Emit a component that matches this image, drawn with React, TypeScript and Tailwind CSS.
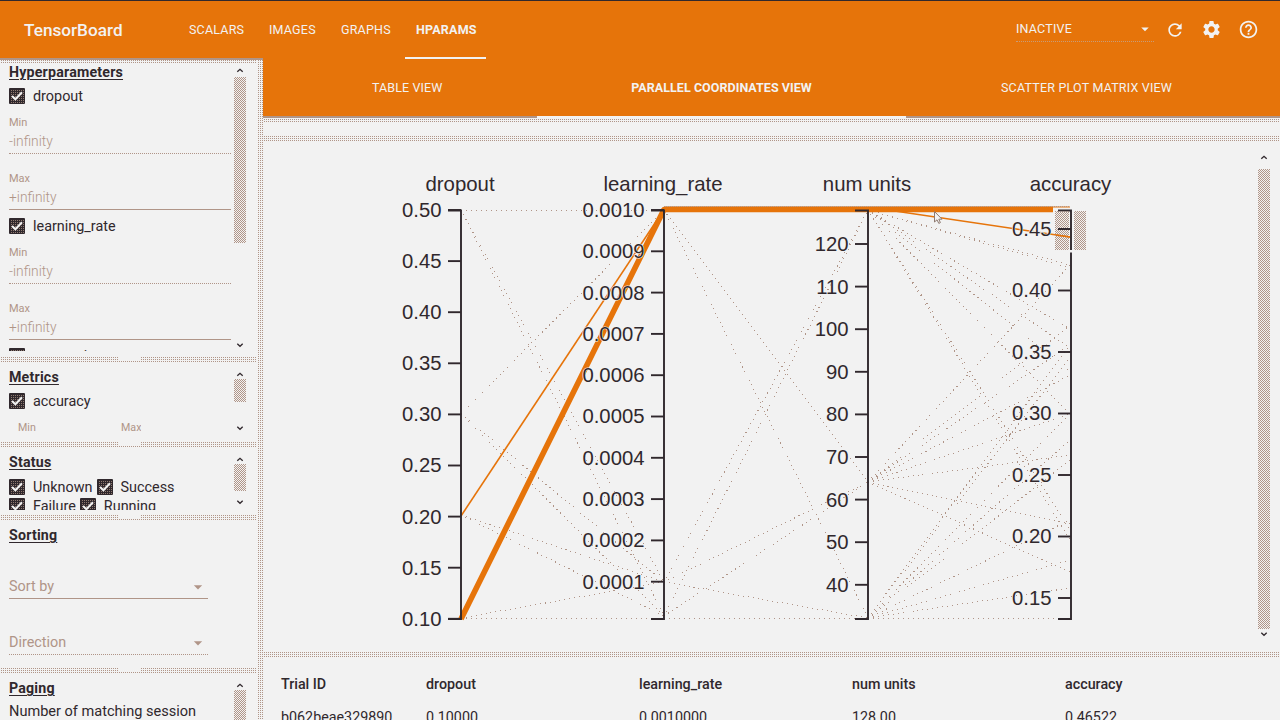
import React from "react";
import { MdRefresh, MdSettings, MdHelpOutline, MdArrowDropDown } from "react-icons/md";

const INK = "#30282d";
const TAN = "#b09588";
const ORANGE = "#e6740a";

function Check() {
  return (
    <svg width="16" height="16" viewBox="0 0 16 16" className="shrink-0">
      <defs>
        <pattern id="weave" width="2" height="2" patternUnits="userSpaceOnUse">
          <rect width="2" height="2" fill={INK} />
          <rect width="1" height="1" fill="#8f7a70" />
        </pattern>
      </defs>
      <rect width="16" height="16" rx="1" fill={INK} />
      <rect x="1" y="1" width="14" height="14" fill="url(#weave)" />
      <path d="M3 8L6.4 11.3L13 4.2" fill="none" stroke="#f2f2f2" strokeWidth="2" />
    </svg>
  );
}

function Chevron({ down = false }: { down?: boolean }) {
  return (
    <svg width="12" height="8" viewBox="0 0 12 8" className="shrink-0">
      <path d={down ? "M3.3 1.8L6 4.3L8.7 1.8" : "M3.3 4.8L6 2.3L8.7 4.8"} fill="none" stroke={INK} strokeWidth="1.3" />
    </svg>
  );
}

function Bar({ thumb, tail = "" }: { thumb: string; tail?: string }) {
  return (
    <div className={"ml-auto flex w-3 shrink-0 flex-col items-center pt-1 " + tail}>
      <Chevron />
      <div
        className={
          "w-3 shrink-0 bg-[conic-gradient(#b09588_25%,transparent_0_50%,#b09588_0_75%,transparent_0)] bg-[length:2px_2px] " +
          thumb
        }
      />
      <div className="mt-auto flex">
        <Chevron down />
      </div>
    </div>
  );
}

function Splitter({ grip = false }: { grip?: boolean }) {
  return (
    <div className="flex h-[6px] shrink-0 justify-center bg-[conic-gradient(#b09588_25%,transparent_0)] bg-[length:2px_2px]">
      {grip && <div className="h-[4px] w-[22px] bg-[#f2f2f2]" />}
    </div>
  );
}

function Title({ children }: { children: React.ReactNode }) {
  return (
    <h3 className="h-5 shrink-0 text-[14.2px] leading-5 font-bold tracking-[0.2px] underline decoration-1 underline-offset-2">
      {children}
    </h3>
  );
}

function Option({ label }: { label: string }) {
  return (
    <div className="flex h-5 shrink-0 items-center gap-2 text-[14.4px]">
      <Check />
      <span className="pt-px leading-5">{label}</span>
    </div>
  );
}

function Field({ label, hint, dotted = false }: { label: string; hint: string; dotted?: boolean }) {
  return (
    <div className={"flex h-[38px] w-[222px] shrink-0 flex-col border-b border-[#b09588] text-[#b09588] " + (dotted ? "border-dotted" : "")}>
      <span className="h-4 text-[11px] leading-[14px]">{label}</span>
      <span className="text-[13.8px] leading-[18px] font-light">{hint}</span>
    </div>
  );
}

function SelectBox({ label, dotted = false }: { label: string; dotted?: boolean }) {
  return (
    <div className={"flex h-6 w-[199px] shrink-0 items-center justify-between border-b border-[#b09588] text-[14.4px] text-[#b09588] " + (dotted ? "border-dotted" : "")}>
      {label}
      <MdArrowDropDown size={20} />
    </div>
  );
}

type Axis = { name: string; x: number; titleX: number; ticks: [string, number][] };

const axes: Axis[] = [
  { name: "dropout", x: 461, titleX: 460, ticks: ["0.50", "0.45", "0.40", "0.35", "0.30", "0.25", "0.20", "0.15", "0.10"].map((t, i) => [t, 210 + i * 51.1]) },
  { name: "learning_rate", x: 664, titleX: 663, ticks: ["0.0010", "0.0009", "0.0008", "0.0007", "0.0006", "0.0005", "0.0004", "0.0003", "0.0002", "0.0001"].map((t, i) => [t, 210 + i * 41.3]) },
  { name: "num units", x: 868, titleX: 867, ticks: ["120", "110", "100", "90", "80", "70", "60", "50", "40"].map((t, i) => [t, 244 + i * 42.6]) },
  { name: "accuracy", x: 1071, titleX: 1070.5, ticks: ["0.45", "0.40", "0.35", "0.30", "0.25", "0.20", "0.15"].map((t, i) => [t, 229 + i * 61.5]) },
];

const faintA: [number, number][] = [[210, 210], [210, 582], [210, 616], [414, 210], [414, 582], [414, 616], [515, 582], [515, 616], [618, 582], [618, 618]];
const faintB: [number, number][] = [[210, 482], [210, 618], [582, 210], [616, 210], [582, 482], [616, 482], [582, 618], [618, 618]];
const faintC: [number, number][] = [
  [210, 265], [210, 268], [210, 329], [210, 348], [210, 371], [210, 414], [210, 530], [210, 540],
  [482, 265], [482, 326], [482, 345], [482, 375], [482, 414], [482, 455], [482, 524], [482, 572],
  [618, 345], [618, 358], [618, 414], [618, 440], [618, 460], [618, 520], [618, 560], [618, 588], [618, 618],
];

function Chart() {
  const groups: [number, number, [number, number][]][] = [
    [461, 664, faintA],
    [664, 868, faintB],
    [868, 1070, faintC],
  ];
  return (
    <svg width="995" height="510" viewBox="263 142 995 510" className="shrink-0" fontFamily='"Liberation Sans", Arial, sans-serif'>
      <defs>
        <pattern id="brush" width="2" height="2" patternUnits="userSpaceOnUse">
          <path d="M0 0h1v1h-1zM1 1h1v1h-1z" fill={TAN} />
        </pattern>
      </defs>
      <g stroke={TAN} strokeWidth="1" strokeDasharray="1 4" shapeRendering="crispEdges">
        {groups.map(([a, b, lines]) => lines.map(([p, q], i) => <line key={`${a}-${i}`} x1={a} x2={b} y1={p} y2={q} />))}
      </g>
      <g fill="none" stroke={ORANGE}>
        <path d="M461 516L664 209.5" strokeWidth="1.6" />
        <path d="M461 619L664 209.5H1053" strokeWidth="5.6" strokeLinejoin="round" />
        <path d="M868 210H888L1070 237" strokeWidth="1.6" />
        <path d="M664 207H1070" strokeWidth="1.2" />
      </g>
      <path d="M664 206.5H1070" stroke={TAN} strokeDasharray="1 1" />
      {axes.map((a) => (
        <g key={a.name}>
          <g stroke={INK} strokeWidth="1.9">
            <path d={`M${a.x - 13} 210.5H${a.x}V619H${a.x - 13}`} fill="none" />
            {a.ticks.map(([t, y]) => (
              <line key={t} x1={a.x - 13} x2={a.x} y1={y} y2={y} />
            ))}
          </g>
          <g fill={INK} fontSize="20.3" textAnchor="end" stroke="#f2f2f2" strokeWidth="1.2" paintOrder="stroke">
            {a.ticks.map(([t, y]) => (
              <text key={t} x={a.x - 19.5} y={y + 6.9}>{t}</text>
            ))}
          </g>
          <text x={a.titleX} y="191" fontSize="20.4" fill={INK} textAnchor="middle">{a.name}</text>
        </g>
      ))}
      <rect x="1055" y="211" width="14" height="39" fill="url(#brush)" />
      <rect x="1074" y="211" width="12" height="39" fill="url(#brush)" />
      <path d="M1056 235L1070 237" stroke={ORANGE} strokeWidth="1.6" />
      <path d="M1058 229H1071" stroke={INK} strokeWidth="1.9" />
      <rect x="1067" y="250" width="9" height="2.5" fill="#f2f2f2" />
      <path d="M934.5 211.5V222L937 219.8L938.8 223.4L940.4 222.6L938.8 219.2H942Z" fill="#f2f2f2" stroke="#8f7a70" strokeWidth="1" />
    </svg>
  );
}

const headers = ["Trial ID", "dropout", "learning_rate", "num units", "accuracy"];
const trial = ["b062beae329890", "0.10000", "0.0010000", "128.00", "0.46522"];

export default function App() {
  return (
    <div className="flex h-[720px] w-[1280px] flex-col overflow-hidden bg-[#f2f2f2] font-['Roboto',sans-serif] text-[#30282d]">
      <header className="flex h-[58px] shrink-0 border-t border-[#30282d] bg-[#e6740a] text-[#f2f2f2]">
        <div className="w-[178px] pl-6 text-[17.2px] leading-[58px] font-medium">TensorBoard</div>
        <nav className="flex text-[12.5px] leading-[58px] tracking-[0.2px]">
          <span className="w-[80px] pl-[11px]">SCALARS</span>
          <span className="w-[72px] pl-[11px]">IMAGES</span>
          <span className="w-[75px] pl-[11px]">GRAPHS</span>
          <span className="relative z-10 h-[58px] w-[81px] border-b-2 border-[#f2f2f2] pl-[11px] font-bold">HPARAMS</span>
        </nav>
        <div className="ml-auto flex items-center pr-[21px]">
          <div className="mr-[11px] flex h-[25px] w-[138px] items-center justify-between border-b border-dotted border-[#c99b78] text-[12.5px] tracking-[0.2px]">
            INACTIVE
            <MdArrowDropDown size={18} />
          </div>
          <MdRefresh size={20} className="mr-[16px]" />
          <MdSettings size={21} className="mr-[16px]" />
          <MdHelpOutline size={21} />
        </div>
      </header>

      <div className="flex min-h-0 flex-1">
        <aside className="flex w-[257px] shrink-0 flex-col border-t-2 border-[#b09588]">
          <div className="h-[3px] shrink-0 bg-[conic-gradient(#b09588_25%,transparent_0)] bg-[length:2px_2px]" />
          <section className="flex h-[294px] shrink-0 pr-[11px] pb-[6px] pl-[9px]">
            <div className="flex flex-col overflow-hidden">
              <div className="-mt-px"><Title>Hyperparameters</Title></div>
              <div className="mt-[4px]"><Option label="dropout" /></div>
              <div className="mt-[10px]"><Field label="Min" hint="-infinity" dotted /></div>
              <div className="mt-[18px]"><Field label="Max" hint="+infinity" /></div>
              <div className="mt-[6px]"><Option label="learning_rate" /></div>
              <div className="mt-[10px]"><Field label="Min" hint="-infinity" dotted /></div>
              <div className="mt-[18px]"><Field label="Max" hint="+infinity" /></div>
              <div className="mt-[6px]"><Option label="num_units" /></div>
            </div>
            <Bar thumb="mt-[2px] h-[166px]" tail="pb-px" />
          </section>
          <Splitter grip />
          <section className="flex h-[79px] shrink-0 pt-1 pr-[11px] pb-[9px] pl-[9px]">
            <div className="flex flex-col overflow-hidden">
              <Title>Metrics</Title>
              <div className="mt-[4px]"><Option label="accuracy" /></div>
              <div className="mt-[10px] flex pl-[9px] text-[10.7px] leading-[14px] text-[#b09588]">
                <span className="w-[103px]">Min</span>
                <span>Max</span>
              </div>
            </div>
            <Bar thumb="h-[23px]" />
          </section>
          <Splitter grip />
          <section className="flex h-[67px] shrink-0 pt-1 pr-[11px] pb-[5px] pl-[9px]">
            <div className="flex flex-col overflow-hidden">
              <Title>Status</Title>
              <div className="mt-[5px] flex gap-1"><Option label="Unknown" /><Option label="Success" /></div>
              <div className="-mt-px flex gap-[4px]"><Option label="Failure" /><Option label="Running" /></div>
            </div>
            <Bar thumb="h-[27px]" tail="pb-[3px]" />
          </section>
          <Splitter grip />
          <section className="flex h-[147px] shrink-0 flex-col pt-1 pl-[9px]">
            <Title>Sorting</Title>
            <div className="mt-[30px]"><SelectBox label="Sort by" /></div>
            <div className="mt-[32px]"><SelectBox label="Direction" dotted /></div>
          </section>
          <Splitter grip />
          <section className="flex min-h-0 flex-1 overflow-hidden pt-1 pr-[11px] pl-[9px]">
            <div className="flex flex-col overflow-hidden">
              <Title>Paging</Title>
              <div className="mt-[4px] text-[14.55px] leading-5 whitespace-nowrap">Number of matching session</div>
            </div>
            <div className="ml-auto flex w-3 flex-col items-center pt-[4px]">
              <Chevron />
              <div className="w-3 flex-1 bg-[conic-gradient(#b09588_25%,transparent_0_50%,#b09588_0_75%,transparent_0)] bg-[length:2px_2px]" />
            </div>
          </section>
        </aside>
        <div className="w-[6px] shrink-0 border-t-2 border-[#b09588] bg-[conic-gradient(#b09588_25%,transparent_0)] bg-[length:2px_2px]" />

        <main className="flex min-w-0 flex-1 flex-col">
          <nav className="flex h-[60px] shrink-0 border-b-2 border-[#b09588] bg-[#e6740a] text-[12.5px] leading-[59px] text-[#f2f2f2]">
            <span className="w-[274px] pl-[109px] tracking-[0.1px]">TABLE VIEW</span>
            <span className="h-[60px] w-[369px] border-b-2 border-[#f2f2f2] text-center font-bold tracking-[0.05px]">PARALLEL COORDINATES VIEW</span>
            <span className="pl-[95px] tracking-[0.2px]">SCATTER PLOT MATRIX VIEW</span>
          </nav>
          <div className="mb-[14px] h-[4px] shrink-0 border-t border-[#f2f2f2] bg-[conic-gradient(#b09588_25%,transparent_0)] bg-[length:2px_2px]" />
          <Splitter />
          <section className="flex h-[510px] shrink-0 overflow-hidden">
            <Chart />
            <div className="flex w-3 flex-col pt-[12px] pb-[13px]">
              <Chevron />
              <div className="mt-[7px] mb-[2px] w-3 flex-1 bg-[conic-gradient(#b09588_25%,transparent_0_50%,#b09588_0_75%,transparent_0)] bg-[length:2px_2px]" />
              <Chevron down />
            </div>
          </section>
          <Splitter />
          <section className="grid grid-cols-[145px_213px_213px_213px_auto] gap-y-[13px] overflow-hidden pt-[16px] pl-[18px] text-[14.3px] leading-5">
            {headers.map((h) => <span key={h} className="font-medium">{h}</span>)}
            {trial.map((v) => <span key={v}>{v}</span>)}
          </section>
        </main>
      </div>
    </div>
  );
}
